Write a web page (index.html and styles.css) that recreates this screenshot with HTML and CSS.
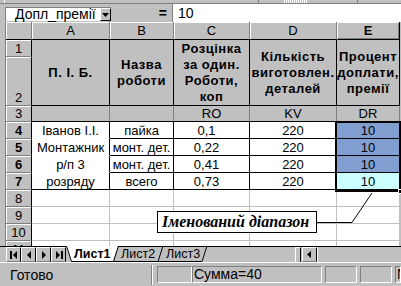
FILE: index.html
```html
<!DOCTYPE html>
<html lang="uk">
<head>
    <meta charset="UTF-8">
    <title>Excel — Допл_премії</title>
    <link rel="stylesheet" href="styles.css">
</head>
<body>
    <div class="window">
        <div class="toolstrip">
            <span class="tool-sep first"></span>
            <span class="tool-sep mid"></span>
            <span class="tool-btn"></span>
            <span class="tool-sep last"></span>
        </div>

        <div class="formula-bar">
            <div class="name-box">
                <span class="name-text">Допл_премії</span>
                <span class="drop-btn">
                    <svg width="7" height="4" viewBox="0 0 7 4"><path d="M0 0h7L3.5 4z" fill="#000"/></svg>
                </span>
            </div>
            <div class="eq">=</div>
            <div class="formula-value">10</div>
        </div>

        <div class="sheet">
            <table class="grid">
                <colgroup>
                    <col class="col-hdr">
                    <col class="col-a">
                    <col class="col-b">
                    <col class="col-c">
                    <col class="col-d">
                    <col class="col-e">
                </colgroup>
                <tr class="row-colhdr">
                    <th class="hdr corner"></th>
                    <th class="hdr">A</th>
                    <th class="hdr">B</th>
                    <th class="hdr">C</th>
                    <th class="hdr">D</th>
                    <th class="hdr active">E</th>
                </tr>
                <tr class="row-1">
                    <th class="hdr rh">1</th>
                    <td class="head" rowspan="2">П. І. Б.</td>
                    <td class="head" rowspan="2">Назва<br>роботи</td>
                    <td class="head" rowspan="2">Розцінка<br>за один.<br>Роботи,<br>коп</td>
                    <td class="head" rowspan="2">Кількість<br>виготовлен.<br>деталей</td>
                    <td class="head" rowspan="2">Процент<br>доплати,<br>премії</td>
                </tr>
                <tr class="row-2">
                    <th class="hdr rh bottom">2</th>
                </tr>
                <tr class="row-3">
                    <th class="hdr rh">3</th>
                    <td class="sub"></td>
                    <td class="sub"></td>
                    <td class="sub">RO</td>
                    <td class="sub">KV</td>
                    <td class="sub">DR</td>
                </tr>
                <tr class="row">
                    <th class="hdr rh active">4</th>
                    <td class="who">Іванов І.І.</td>
                    <td class="box">пайка</td>
                    <td class="box num">0,1</td>
                    <td class="box">220</td>
                    <td class="box picked">10</td>
                </tr>
                <tr class="row">
                    <th class="hdr rh active">5</th>
                    <td class="who">Монтажник</td>
                    <td class="box">монт. дет.</td>
                    <td class="box num">0,22</td>
                    <td class="box">220</td>
                    <td class="box picked">10</td>
                </tr>
                <tr class="row">
                    <th class="hdr rh active">6</th>
                    <td class="who">р/п 3</td>
                    <td class="box">монт. дет.</td>
                    <td class="box num">0,41</td>
                    <td class="box">220</td>
                    <td class="box picked">10</td>
                </tr>
                <tr class="row">
                    <th class="hdr rh active">7</th>
                    <td class="who last">розряду</td>
                    <td class="box">всего</td>
                    <td class="box num">0,73</td>
                    <td class="box">220</td>
                    <td class="box current">10</td>
                </tr>
                <tr class="row">
                    <th class="hdr rh">8</th>
                    <td></td><td></td><td></td><td></td><td></td>
                </tr>
                <tr class="row">
                    <th class="hdr rh">9</th>
                    <td></td><td></td><td></td><td></td><td></td>
                </tr>
                <tr class="row">
                    <th class="hdr rh">10</th>
                    <td></td><td></td><td></td><td></td><td></td>
                </tr>
                <tr class="row">
                    <th class="hdr rh">11</th>
                    <td></td><td></td><td></td><td></td><td></td>
                </tr>
            </table>

            <div class="selection"><span class="fill-handle"></span></div>
            <svg class="leader" width="395" height="224">
                <polyline points="311,200.5 346,200.5 366,171" fill="none" stroke="#000" stroke-width="1"/>
            </svg>
            <div class="callout">Іменований діапазон</div>
        </div>

        <div class="tabs-bar">
            <div class="nav">
                <span class="nav-btn">
                    <svg width="8" height="8" viewBox="0 0 8 8"><path d="M0 0h2v8H0zM7 0v8L3 4z" fill="#000"/></svg>
                </span>
                <span class="nav-btn">
                    <svg width="8" height="8" viewBox="0 0 8 8"><path d="M6 0v8L2 4z" fill="#000"/></svg>
                </span>
                <span class="nav-btn">
                    <svg width="8" height="8" viewBox="0 0 8 8"><path d="M2 0v8l4-4z" fill="#000"/></svg>
                </span>
                <span class="nav-btn">
                    <svg width="8" height="8" viewBox="0 0 8 8"><path d="M1 0v8l4-4zM6 0h2v8H6z" fill="#000"/></svg>
                </span>
            </div>
            <div class="tab-strip">
                <svg class="tab-lines" width="145" height="16">
                    <polygon points="0,0 52,0 47,15 5,15" fill="#fff"/>
                    <polyline points="0.5,0 5.5,15.5 47.5,15.5 52.5,0" fill="none" stroke="#000"/>
                    <polyline points="47,15.5 92,15.5 97,0" fill="none" stroke="#000"/>
                    <polyline points="92,15.5 136,15.5 141,0" fill="none" stroke="#000"/>
                </svg>
                <span class="tab current">Лист1</span>
                <span class="tab">Лист2</span>
                <span class="tab">Лист3</span>
            </div>
            <div class="tabs-gap"></div>
            <span class="split-box"></span>
            <span class="scroll-btn">
                <svg width="4" height="7" viewBox="0 0 4 7"><path d="M4 0v7L0 3.5z" fill="#000"/></svg>
            </span>
            <div class="scroll-track"></div>
        </div>

        <div class="status-bar">
            <span class="status-text">Готово</span>
            <span class="groove"></span>
            <span class="panel p-empty"></span>
            <span class="panel p-sum">Сумма=40</span>
            <span class="panel p-small"></span>
            <span class="panel p-small"></span>
            <span class="panel p-num">N</span>
        </div>
    </div>
</body>
</html>
```

FILE: styles.css
```css
* {
    box-sizing: border-box;
}

body {
    margin: 0;
    background: #c0c0c0;
    color: #000;
    font-family: "Liberation Sans", Arial, sans-serif;
    font-size: 13px;
}

.window {
    width: 401px;
    height: 286px;
    overflow: hidden;
    display: flex;
    flex-direction: column;
    background: #c0c0c0;
}

/* toolbar remnant on top */
.toolstrip {
    height: 4px;
    display: flex;
    border-bottom: 1px solid #808080;
}

.tool-sep {
    width: 1px;
    background: #fff;
}

.tool-sep.first { margin-left: 4px; }
.tool-sep.mid { margin-left: 253px; background: #808080; }

.tool-btn {
    width: 24px;
    margin-left: 25px;
    background: repeating-linear-gradient(90deg, #fff 0 1px, #c0c0c0 1px 2px);
}

.tool-sep.last { margin-left: 49px; background: #808080; }

/* formula bar */
.formula-bar {
    height: 18px;
    display: flex;
    align-items: stretch;
}

.name-box {
    width: 106px;
    margin: 3px 0 1px 5px;
    display: flex;
    background: #fff;
    border-top: 1px solid #808080;
    border-left: 1px solid #808080;
}

.name-text {
    flex: 1;
    padding-left: 9px;
    line-height: 13px;
    font-size: 14px;
}

.drop-btn {
    width: 11px;
    display: flex;
    align-items: center;
    justify-content: center;
    background: #c0c0c0;
    border-top: 1px solid #fff;
    border-left: 1px solid #fff;
    border-right: 1px solid #000;
    border-bottom: 1px solid #000;
}

.eq {
    flex: 1;
    text-align: right;
    padding-right: 5px;
    font-weight: bold;
    font-size: 14px;
    line-height: 18px;
}

.formula-value {
    width: 229px;
    background: #fff;
    border-left: 1px solid #808080;
    padding-left: 5px;
    font-size: 14px;
    line-height: 18px;
}

/* worksheet */
.sheet {
    position: relative;
    height: 224px;
    margin-left: 5px;
    border-left: 1px solid #808080;
    overflow: hidden;
}

.grid {
    table-layout: fixed;
    border-collapse: separate;
    border-spacing: 0;
    width: 394px;
}

.col-hdr { width: 26px; }
.col-a { width: 78px; }
.col-b { width: 64px; }
.col-c { width: 76px; }
.col-d { width: 87px; }
.col-e { width: 63px; }

.grid th,
.grid td {
    padding: 0;
    white-space: nowrap;
    overflow: hidden;
    text-align: center;
    vertical-align: middle;
    line-height: 15px;
}

.grid td {
    background: #fff;
    border-right: 1px solid #c0c0c0;
    border-bottom: 1px solid #c0c0c0;
}

.row-colhdr { height: 18px; }
.row-1 { height: 17px; }
.row-2 { height: 49px; }
.row-3 { height: 16px; }
.row { height: 17px; }

.hdr {
    background: #c0c0c0;
    font-weight: normal;
    border-right: 1px solid #808080;
    border-bottom: 1px solid #808080;
    box-shadow: inset 1px 1px 0 #fff;
}

.row-colhdr .hdr {
    border-bottom-color: #000;
}

.rh {
    border-right-color: #000;
}

.rh.bottom {
    vertical-align: bottom;
}

.hdr.active {
    font-weight: bold;
}

.row-colhdr .hdr.active {
    border-right: 1px solid #000;
    box-shadow: inset 1px 1px 0 #fff, inset -1px -1px 0 #808080;
}

.grid td.head {
    background: #c0c0c0;
    font-weight: bold;
    letter-spacing: 0.5px;
    line-height: 16px;
    border-right-color: #000;
    border-bottom-color: #000;
}

.grid td.sub {
    background: #c0c0c0;
    border-right-color: #808080;
    border-bottom-color: #000;
}

.grid td.who {
    border-right-color: #000;
    border-bottom-color: #fff;
}

.grid td.who.last,
.grid td.box {
    border-right-color: #000;
    border-bottom-color: #000;
}

.grid td.num {
    padding-right: 10px;
}

.grid td.picked {
    background: #809fd0;
}

.grid td.current {
    background: #ccffff;
}

.selection {
    position: absolute;
    left: 329px;
    top: 99px;
    width: 66px;
    height: 71px;
    border: 2px solid #000;
}

.fill-handle {
    position: absolute;
    right: -4px;
    bottom: -4px;
    width: 5px;
    height: 5px;
    background: #000;
    border: 1px solid #fff;
}

.leader {
    position: absolute;
    left: 0;
    top: 0;
    pointer-events: none;
}

.callout {
    position: absolute;
    left: 151px;
    top: 189px;
    width: 160px;
    height: 22px;
    background: #fff;
    border: 1px solid #000;
    font-family: "Liberation Serif", "Times New Roman", serif;
    font-style: italic;
    font-weight: bold;
    font-size: 16px;
    line-height: 20px;
    padding-left: 4px;
    white-space: nowrap;
}

/* sheet tabs + horizontal scroll */
.tabs-bar {
    height: 16px;
    display: flex;
    border-top: 1px solid #000;
    padding-left: 6px;
}

.nav {
    display: flex;
}

.nav-btn {
    width: 15px;
    height: 15px;
    display: flex;
    align-items: center;
    justify-content: center;
    border-top: 1px solid #fff;
    border-left: 1px solid #fff;
    border-right: 1px solid #000;
    border-bottom: 1px solid #808080;
}

.tab-strip {
    position: relative;
    width: 145px;
    display: flex;
}

.tab-lines {
    position: absolute;
    left: 0;
    top: -1px;
}

.tab {
    position: relative;
    line-height: 14px;
    padding-left: 5px;
    width: 45px;
    font-size: 12.5px;
}

.tab.current {
    font-weight: bold;
    padding-left: 8px;
    width: 50px;
}

.tabs-gap {
    flex: 1;
}

.split-box {
    width: 6px;
    margin-right: 1px;
    border-left: 1px solid #fff;
    border-right: 1px solid #000;
    border-top: 1px solid #fff;
}

.scroll-btn {
    width: 15px;
    height: 15px;
    display: flex;
    align-items: center;
    justify-content: center;
    border-top: 1px solid #fff;
    border-left: 1px solid #fff;
    border-right: 1px solid #000;
    border-bottom: 1px solid #808080;
}

.scroll-track {
    flex: 1;
    border-left: 1px solid #fff;
}

/* status bar */
.status-bar {
    height: 24px;
    display: flex;
    align-items: center;
    border-top: 1px solid #fff;
}

.status-text {
    width: 151px;
    padding-left: 10px;
    font-size: 14px;
}

.groove {
    width: 2px;
    height: 20px;
    border-left: 1px solid #808080;
    border-right: 1px solid #fff;
    margin-right: 4px;
}

.panel {
    height: 17px;
    border-top: 1px solid #808080;
    border-left: 1px solid #808080;
    border-right: 1px solid #fff;
    border-bottom: 1px solid #fff;
    font-size: 14px;
    line-height: 15px;
    overflow: hidden;
}

.p-empty { width: 35px; }
.p-sum { width: 130px; padding-left: 1px; }
.p-small { width: 32px; margin-left: 3px; }
.p-num { flex: 1; margin-left: 3px; padding-left: 1px; }
```
